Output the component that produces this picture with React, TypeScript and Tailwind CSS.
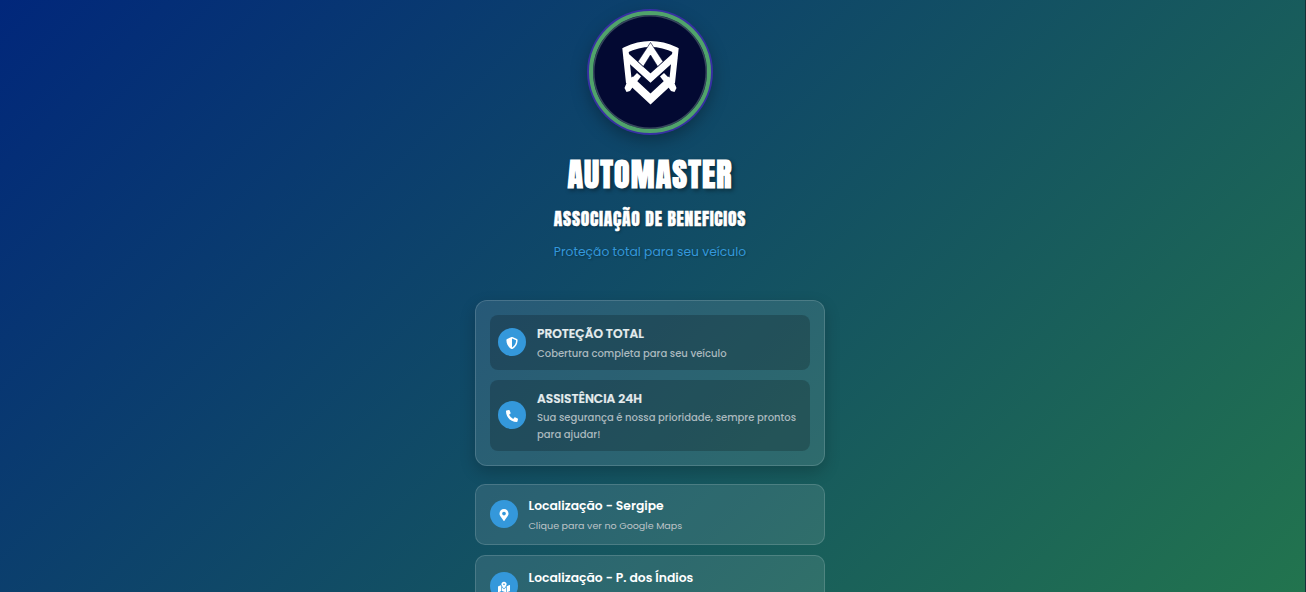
import { ReactNode } from "react";
import { FaMapMarkedAlt, FaMapMarkerAlt, FaPhoneAlt, FaShieldAlt } from "react-icons/fa";

function IconDot({ children }: { children: ReactNode }) {
  return (
    <span className="flex size-7 shrink-0 items-center justify-center rounded-full bg-[#3498db] pt-px text-[12px] text-white">
      {children}
    </span>
  );
}

function Emblem() {
  return (
    <div className="flex size-[122px] shrink-0 items-center justify-center rounded-full border-4 border-[#50a36b] bg-[#030932] shadow-[inset_0_0_0_1.5px_#35465c,0_0_0_2px_#3730a3,0_6px_18px_rgba(0,0,0,0.35)]">
      <svg viewBox="0 0 76 80" className="h-20 w-[76px]" fill="none" stroke="#fff">
        <path strokeWidth="6" d="M17 51L13.500 18Q38.500 6 63.500 18L60 51" />
        <path strokeWidth="7" d="M14 24L38.500 46L63 24" />
        <path strokeWidth="8" d="M17.500 47.500L38.500 67L59.500 47.500" />
        <path fill="#fff" stroke="none" d="M25 41L29 44.500L23 52L18 59L14.500 60L12.500 56L15 50L20 46ZM52 41L48 44.500L54 52L59 59L62.500 60L64.500 56L62 50L57 46Z" />
        <path fill="#fff" stroke="#030932" strokeWidth="0.600" d="M38.500 10.500L51 29.500L45.700 34.500L38.500 23L31.300 34.500L26 29.500Z" />
      </svg>
    </div>
  );
}

function Feature({ icon, title, children }: { icon: ReactNode; title: ReactNode; children: ReactNode }) {
  return (
    <div className="flex items-center gap-[11px] rounded-lg bg-black/20 px-2 py-[9px]">
      <IconDot>{icon}</IconDot>
      <div className="flex flex-col whitespace-nowrap">
        <h3 className="h-5 text-[12.200px] leading-[20px] font-semibold text-[#e5ecee] [-webkit-text-stroke:0.200px_#e5ecee]">{title}</h3>
        <p className="-mb-[1.200px] pt-[0.800px] text-[10.030px] leading-[17px] font-medium text-[#abb9bf]">{children}</p>
      </div>
    </div>
  );
}

function LocationLink({ icon, title, children }: { icon: ReactNode; title: ReactNode; children?: ReactNode }) {
  return (
    <a className="flex min-h-[61px] shrink-0 items-center gap-[10.500px] rounded-[10px] border border-white/15 bg-white/10 px-3.5 pt-[10.500px] pb-[9.500px] last:pt-[11.500px]">
      <div className="mb-px">
        <IconDot>{icon}</IconDot>
      </div>
      <div className="flex flex-col whitespace-nowrap">
        <h3 className="text-[12.350px] leading-[22px] font-semibold text-white">{title}</h3>
        <p className="min-h-[17px] text-[9.550px] leading-[17px] text-[#bdc3c7]">{children}</p>
      </div>
    </a>
  );
}

export default function App() {
  return (
    <div className="flex h-[592px] overflow-hidden border-r border-[#17323a] bg-[linear-gradient(135deg,#01277b_0%,#22744e_100%)] font-['Poppins',sans-serif]">
      <main className="ml-[475px] flex w-[350px] flex-col pt-[11px]">
        <header className="flex flex-col items-center whitespace-nowrap">
          <Emblem />
          <h1 className="mt-[18px] h-12 font-['Anton',sans-serif] text-[32px] leading-[48px] font-bold tracking-[1.100px] text-white [text-shadow:2px_2px_4px_rgba(0,0,0,0.4)]">AUTOMASTER</h1>
          <h2 className="mt-2 h-6 font-['Anton',sans-serif] text-[17.600px] leading-6 font-normal tracking-[0.700px] text-white [-webkit-text-stroke:0.400px_white] [text-shadow:1px_1px_3px_rgba(0,0,0,0.4)]">ASSOCIAÇÃO DE BENEFICIOS</h2>
          <p className="mt-[11px] h-5 text-[12.330px] leading-5 text-[#3498db] [text-shadow:1px_1px_2px_rgba(0,0,0,0.3)]">Proteção total para seu veículo</p>
        </header>
        <section className="mt-[38px] flex flex-col gap-2.5 rounded-xl border border-white/15 bg-white/10 p-3.5 shadow-[0_6px_16px_rgba(0,0,0,0.2)]">
          <Feature icon={<FaShieldAlt />} title="PROTEÇÃO TOTAL">Cobertura completa para seu veículo</Feature>
          <Feature icon={<FaPhoneAlt />} title="ASSISTÊNCIA 24H">
            Sua segurança é nossa prioridade, sempre prontos<br />para ajudar!
          </Feature>
        </section>
        <nav className="mt-[17.600px] flex flex-col gap-2.5">
          <LocationLink icon={<FaMapMarkerAlt />} title="Localização - Sergipe">Clique para ver no Google Maps</LocationLink>
          <LocationLink icon={<FaMapMarkedAlt />} title="Localização - P. dos Índios" />
        </nav>
      </main>
    </div>
  );
}
